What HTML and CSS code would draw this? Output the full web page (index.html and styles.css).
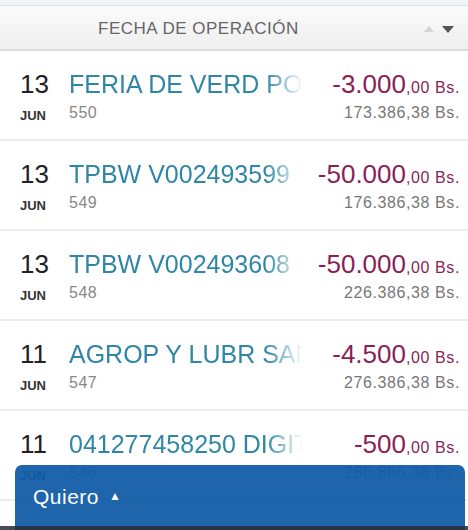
FILE: index.html
```
<!DOCTYPE html>
<html lang="es">
<head>
    <meta charset="UTF-8">
    <meta name="viewport" content="width=device-width, initial-scale=1.0">
    <title>Movimientos</title>
    <link rel="stylesheet" href="styles.css">
</head>
<body>
    <div class="top-strip"></div>
    <div class="list-head">
        <span class="head-title">FECHA DE OPERACIÓN</span>
        <span class="sort">
            <span class="sort-up"></span>
            <span class="sort-down"></span>
        </span>
    </div>

    <ul class="moves">
        <li class="move">
            <span class="day">13</span>
            <span class="title">FERIA DE VERD POS</span>
            <span class="amount">-3.000<small>,00 Bs.</small></span>
            <span class="month">JUN</span>
            <span class="ref">550</span>
            <span class="balance">173.386,38 Bs.</span>
        </li>
        <li class="move">
            <span class="day">13</span>
            <span class="title">TPBW V002493599</span>
            <span class="amount">-50.000<small>,00 Bs.</small></span>
            <span class="month">JUN</span>
            <span class="ref">549</span>
            <span class="balance">176.386,38 Bs.</span>
        </li>
        <li class="move">
            <span class="day">13</span>
            <span class="title">TPBW V002493608</span>
            <span class="amount">-50.000<small>,00 Bs.</small></span>
            <span class="month">JUN</span>
            <span class="ref">548</span>
            <span class="balance">226.386,38 Bs.</span>
        </li>
        <li class="move">
            <span class="day">11</span>
            <span class="title">AGROP Y LUBR SAN</span>
            <span class="amount">-4.500<small>,00 Bs.</small></span>
            <span class="month">JUN</span>
            <span class="ref">547</span>
            <span class="balance">276.386,38 Bs.</span>
        </li>
        <li class="move">
            <span class="day">11</span>
            <span class="title">041277458250 DIGITEL</span>
            <span class="amount">-500<small>,00 Bs.</small></span>
            <span class="month">JUN</span>
            <span class="ref">546</span>
            <span class="balance">280.886,38 Bs.</span>
        </li>
    </ul>

    <div class="quiero">
        <span>Quiero</span>
        <span class="caret">&#9650;</span>
    </div>
    <div class="screen-edge"></div>
</body>
</html>
```

FILE: styles.css
```
* {
    margin: 0;
    padding: 0;
    box-sizing: border-box;
}

body {
    width: 468px;
    height: 530px;
    overflow: hidden;
    background: #fff;
    font-family: "Liberation Sans", Arial, sans-serif;
    position: relative;
}

ul {
    list-style: none;
}

.top-strip {
    height: 6px;
    background: #f1f3f6;
    border-bottom: 1px solid #dfe1e4;
}

/* cabecera de la lista */
.list-head {
    height: 45px;
    display: flex;
    align-items: center;
    padding: 3px 14px 0 98px;
    background: linear-gradient(#fbfbfb, #eeeeee);
    border-bottom: 2px solid #dcdcdc;
}

.head-title {
    flex: 1;
    font-size: 17px;
    color: #666;
    letter-spacing: 0.5px;
}

.sort {
    display: flex;
    align-items: center;
    gap: 8px;
}

.sort-up {
    width: 0;
    height: 0;
    border-left: 5px solid transparent;
    border-right: 5px solid transparent;
    border-bottom: 6px solid #d4d4d4;
}

.sort-down {
    width: 0;
    height: 0;
    border-left: 6px solid transparent;
    border-right: 6px solid transparent;
    border-top: 7px solid #555;
}

/* movimientos */
.move {
    height: 90px;
    display: grid;
    grid-template-columns: 49px 234px 1fr;
    grid-template-rows: 28px 18px;
    row-gap: 6px;
    align-content: start;
    padding: 19px 8px 0 20px;
    border-bottom: 2px solid #ececec;
}

.day {
    font-size: 26px;
    line-height: 28px;
    color: #222;
}

.title {
    font-size: 25px;
    line-height: 28px;
    color: #2f86a7;
    white-space: nowrap;
    overflow: hidden;
    -webkit-mask-image: linear-gradient(to right, #000 84%, transparent 100%);
    mask-image: linear-gradient(to right, #000 84%, transparent 100%);
}

.amount {
    font-size: 26px;
    line-height: 28px;
    color: #8a1f56;
    text-align: right;
    white-space: nowrap;
}

.amount small {
    font-size: 16px;
    letter-spacing: 0.6px;
}

.month {
    font-size: 13px;
    font-weight: bold;
    line-height: 18px;
    color: #333;
    padding-top: 3px;
}

.ref {
    font-size: 16px;
    line-height: 18px;
    color: #888;
    letter-spacing: 0.5px;
}

.balance {
    font-size: 16px;
    line-height: 18px;
    color: #777;
    text-align: right;
    letter-spacing: 0.6px;
}

/* panel inferior */
.quiero {
    position: absolute;
    left: 15px;
    right: 3px;
    top: 465px;
    height: 65px;
    padding: 20px 18px;
    background: rgba(17, 91, 166, 0.94);
    border-radius: 7px 7px 0 0;
    color: #fff;
    font-size: 21px;
    letter-spacing: 0.5px;
    display: flex;
    align-items: flex-start;
    gap: 10px;
}

.quiero .caret {
    font-size: 12px;
    line-height: 22px;
}

.screen-edge {
    position: absolute;
    left: 0;
    right: 0;
    bottom: 0;
    height: 4px;
    background: rgba(40, 44, 50, 0.85);
}
```
